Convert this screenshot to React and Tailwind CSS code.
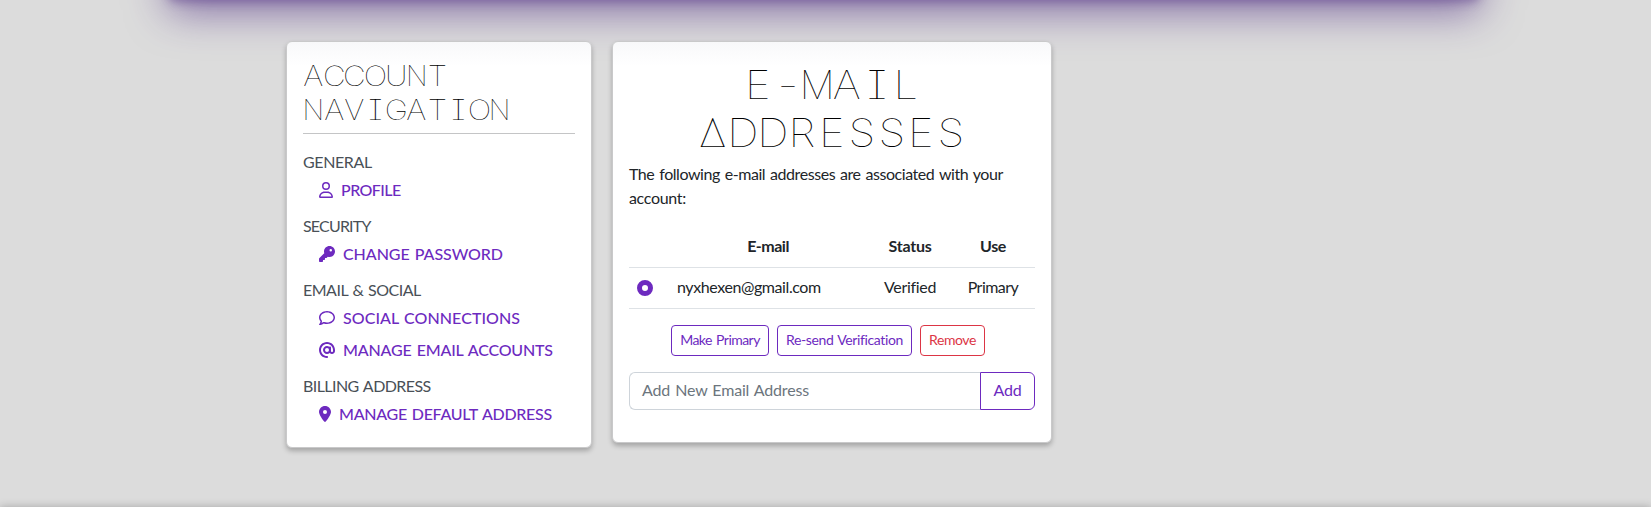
import { useLayoutEffect, useRef } from "react";
import { FaRegUser, FaKey, FaRegComment, FaAt, FaLocationDot } from "react-icons/fa6";

// Tracks a line of text so that it fills the given width exactly.
function Fit({ width, children, className = "" }) {
  const ref = useRef(null);
  useLayoutEffect(() => {
    const el = ref.current;
    el.style.letterSpacing = "0px";
    const natural = el.getBoundingClientRect().width;
    el.style.letterSpacing = `${(width - natural) / (children.length - 0.5)}px`;
  }, [width, children]);
  return (
    <span ref={ref} className={`inline-block whitespace-nowrap [word-spacing:1.2px] ${className}`}>
      {children}
    </span>
  );
}

// Narrow glyphs are widened to sit evenly in their cells.
const stretch = { I: "scale-x-150", M: "", N: "", "-": "scale-x-125" };

// Sets a line in fixed-pitch cells.
function MonoLine({ text, cell }) {
  return (
    <span className="flex">
      {[...text].map((c, i) => (
        <span key={i} className={`flex justify-center ${cell} ${stretch[c] ?? "scale-x-112"}`}>
          {c}
        </span>
      ))}
    </span>
  );
}

const sections = [
  { label: "GENERAL", w: 69, items: [{ Icon: FaRegUser, size: "w-[14px]", text: "PROFILE", w: 60 }] },
  { label: "SECURITY", w: 68, items: [{ Icon: FaKey, size: "w-4", text: "CHANGE PASSWORD", w: 160 }] },
  {
    label: "EMAIL & SOCIAL",
    w: 118,
    items: [
      { Icon: FaRegComment, size: "w-4", text: "SOCIAL CONNECTIONS", w: 177 },
      { Icon: FaAt, size: "w-4", text: "MANAGE EMAIL ACCOUNTS", w: 210 },
    ],
  },
  { label: "BILLING ADDRESS", w: 128, items: [{ Icon: FaLocationDot, size: "w-3", text: "MANAGE DEFAULT ADDRESS", w: 213 }] },
];

const card =
  "rounded-md border border-[#c9c9ca] bg-white bg-linear-to-b from-[#f8f8fa] from-0% to-white to-[24px] px-4 shadow-[0_3px_5px_rgba(0,0,0,0.25)]";

export default function App() {
  return (
    <div className="flex h-[507px] flex-col overflow-hidden bg-[#dcdcdc] font-['Lato',sans-serif] text-base text-[#212529]">
      <header className="ml-[168px] flex h-0 w-[1312px] items-end">
        <div className="h-[100px] w-full shrink-0 rounded-lg bg-[#5a3d85] shadow-[0_2px_10px_rgba(77,42,130,0.4),0_12px_40px_rgba(77,42,130,0.6)]" />
      </header>
      <main className="flex h-[507px] shrink-0 items-start gap-5 pt-[41px] pl-[286px]">
        <nav className={`h-[407px] w-[306px] ${card}`}>
          <h2 className="border-b border-[#c4c5c6] pt-[17px] pb-1.5 font-['Inter',sans-serif] text-[28px] leading-[34px] font-thin text-black [font-feature-settings:'cv08']">
            <MonoLine text="ACCOUNT" cell="w-[20.7px]" />
            <MonoLine text="NAVIGATION" cell="w-[20.7px]" />
          </h2>
          <div className="pt-4">
            {sections.map((s) => (
              <section key={s.label} className="mb-2">
                <h3 className="h-6 leading-6 text-[#495057]">
                  <Fit width={s.w}>{s.label}</Fit>
                </h3>
                {s.items.map(({ Icon, size, text, w }) => (
                  <a key={text} className="flex h-8 items-center gap-2 pl-4 leading-6 font-medium text-[#6d2abf]">
                    <Icon className={`h-4 shrink-0 ${size}`} />
                    <Fit width={w}>{text}</Fit>
                  </a>
                ))}
              </section>
            ))}
          </div>
        </nav>

        <section className={`h-[402px] w-[440px] ${card}`}>
          <h1 className="flex flex-col items-center pt-[19px] font-['Inter',sans-serif] text-[39px] leading-[48px] font-thin text-black [font-feature-settings:'cv08']">
            <MonoLine text="E-MAIL" cell="w-[29.7px]" />
            <MonoLine text="ΔDDRESSES" cell="w-[29.7px]" />
          </h1>
          <p className="mt-[5px] leading-6">
            <Fit width={374}>The following e-mail addresses are associated with your</Fit>
            <br />
            <Fit width={57}>account:</Fit>
          </p>
          <div className="mt-4 grid grid-cols-[32px_214px_70px_90px] text-center">
            <div className="col-span-4 grid h-[42px] grid-cols-subgrid items-center border-b border-[#dee2e6] pb-0.5 font-bold">
              <span />
              <span><Fit width={42}>E-mail</Fit></span>
              <span><Fit width={43}>Status</Fit></span>
              <span className="pl-1.5"><Fit width={26}>Use</Fit></span>
            </div>
            <div className="col-span-4 grid h-[41px] grid-cols-subgrid items-center border-b border-[#dee2e6]">
              <span className="ml-2 size-4 rounded-full border-[5px] border-[#6d2abf] bg-white" />
              <span className="pb-0.5 pl-4 text-left"><Fit width={144}>nyxhexen@gmail.com</Fit></span>
              <span className="pb-0.5"><Fit width={52}>Verified</Fit></span>
              <span className="pb-0.5 pl-1.5"><Fit width={51}>Primary</Fit></span>
            </div>
          </div>
          <div className="mt-4 ml-[42px] flex gap-2 text-sm text-[#6d2abf]">
            <button className="h-[31px] w-[98px] rounded border border-[#6d2abf] pb-0.5"><Fit width={80}>Make Primary</Fit></button>
            <button className="h-[31px] w-[135px] rounded border border-[#6d2abf] pb-0.5"><Fit width={117}>Re-send Verification</Fit></button>
            <button className="h-[31px] w-[65px] rounded border border-[#dc3545] pb-0.5 text-[#dc3545]"><Fit width={47}>Remove</Fit></button>
          </div>
          <div className="mt-4 flex h-[38px]">
            <div className="flex flex-1 items-center rounded-l-md border border-r-0 border-[#ced4da] pb-0.5 pl-3 text-[#6c757d]">
              <Fit width={167}>Add New Email Address</Fit>
            </div>
            <button className="w-[55px] rounded-r-md border border-[#6d2abf] pb-0.5 text-[#6d2abf]"><Fit width={28}>Add</Fit></button>
          </div>
        </section>
      </main>
      <footer className="h-4 w-full shrink-0 shadow-[0_0_8px_rgba(0,0,0,0.25)]" />
    </div>
  );
}
